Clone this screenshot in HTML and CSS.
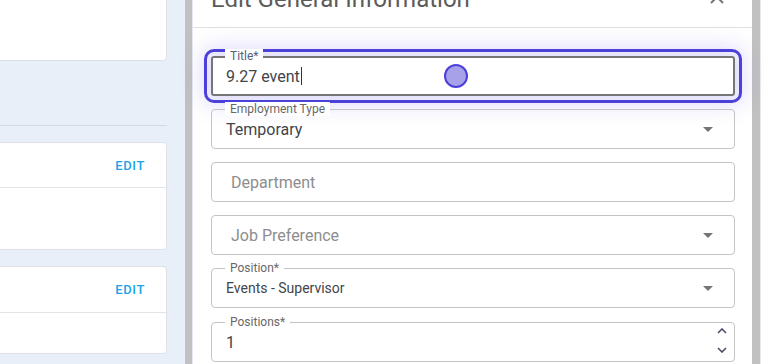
FILE: index.html
```html
<!DOCTYPE html>
<html lang="en">
<head>
    <meta charset="UTF-8">
    <meta name="viewport" content="width=device-width, initial-scale=1.0">
    <title>Edit General Information</title>
    <link rel="stylesheet" href="styles.css">
</head>
<body>
    <div class="page">
        <main class="main">
            <div class="card card-top"></div>
            <div class="section-line"></div>

            <div class="card card-mid">
                <div class="card-header">
                    <button class="edit-btn">EDIT</button>
                </div>
                <div class="card-body"></div>
            </div>

            <div class="card card-low">
                <div class="card-header">
                    <button class="edit-btn">EDIT</button>
                </div>
                <div class="card-body"></div>
            </div>
        </main>

        <div class="scrollbar"></div>

        <aside class="drawer">
            <div class="drawer-header">
                <h2 class="drawer-title">Edit General Information</h2>
                <button class="close-btn" aria-label="Close">
                    <svg width="14" height="14" viewBox="0 0 14 14">
                        <path d="M1 1 L13 13 M13 1 L1 13" stroke="#757575" stroke-width="2" fill="none"/>
                    </svg>
                </button>
            </div>

            <form class="drawer-body">
                <div class="field field-focused">
                    <label class="field-label label-focused">Title*</label>
                    <div class="field-value">9.27 event<span class="caret"></span></div>
                    <span class="click-dot"></span>
                </div>

                <div class="field">
                    <label class="field-label">Employment Type</label>
                    <div class="field-value">Temporary</div>
                    <span class="select-arrow"></span>
                </div>

                <div class="field">
                    <div class="field-placeholder">Department</div>
                </div>

                <div class="field">
                    <div class="field-placeholder">Job Preference</div>
                    <span class="select-arrow"></span>
                </div>

                <div class="field">
                    <label class="field-label">Position*</label>
                    <div class="field-value small">Events - Supervisor</div>
                    <span class="select-arrow"></span>
                </div>

                <div class="field field-last">
                    <label class="field-label">Positions*</label>
                    <div class="field-value">1</div>
                    <div class="spinner">
                        <svg width="10" height="6" viewBox="0 0 10 6">
                            <path d="M1 5 L5 1 L9 5" stroke="#4a4d6a" stroke-width="1.6" fill="none"/>
                        </svg>
                        <svg width="10" height="6" viewBox="0 0 10 6">
                            <path d="M1 1 L5 5 L9 1" stroke="#4a4d6a" stroke-width="1.6" fill="none"/>
                        </svg>
                    </div>
                </div>
            </form>
        </aside>

        <div class="scrollbar scrollbar-right"></div>
        <div class="edge"></div>
    </div>
</body>
</html>
```

FILE: styles.css
```css
* {
    margin: 0;
    padding: 0;
    box-sizing: border-box;
}

body {
    font-family: Roboto, 'Liberation Sans', Arial, sans-serif;
    background-color: #ffffff;
    color: #3c4043;
    overflow: hidden;
}

.page {
    display: flex;
    height: 364px;
    overflow: hidden;
}

/* Background page */
.main {
    width: 185px;
    flex: none;
    background-color: #e8eff8;
    padding-right: 18px;
    display: flex;
    flex-direction: column;
}

.card {
    background-color: #ffffff;
    border: 1px solid #dde1e6;
    border-radius: 4px;
    margin-left: -10px;
    width: 177px;
}

.card-top {
    height: 101px;
    margin-top: -40px;
}

.section-line {
    height: 1px;
    background-color: #d3d9e1;
    margin-top: 64px;
    width: 167px;
}

.card-mid {
    margin-top: 16px;
    height: 108px;
}

.card-low {
    margin-top: 16px;
    height: 88px;
}

.card-header {
    height: 45px;
    border-bottom: 1px solid #e0e3e7;
    display: flex;
    align-items: center;
    justify-content: flex-end;
    padding-right: 21px;
}

.card-low .card-header {
    height: 46px;
}

.edit-btn {
    border: none;
    background: none;
    font-family: Roboto, 'Liberation Sans', Arial, sans-serif;
    font-size: 13px;
    font-weight: 500;
    letter-spacing: 0.6px;
    color: #1aa3e8;
}

.scrollbar {
    width: 7px;
    flex: none;
    background-color: #c1c1c1;
}

.scrollbar-right {
    width: 8px;
}

.edge {
    width: 8px;
    flex: none;
    background-color: #ffffff;
    border-left: 1px solid #e8e8e8;
}

/* Drawer */
.drawer {
    flex: 1;
    background-color: #ffffff;
    border-left: 1px solid #e3e8f1;
    display: flex;
    flex-direction: column;
}

.drawer-header {
    height: 45px;
    margin-top: -17px;
    border-bottom: 1px solid #e0e0e0;
    padding: 0 28px 0 18px;
    display: flex;
    justify-content: space-between;
    align-items: flex-start;
}

.drawer-title {
    font-size: 24px;
    font-weight: 400;
    line-height: 28px;
    margin-top: 2px;
    color: #5b5b5b;
}

.close-btn {
    border: none;
    background: none;
    margin-top: 7px;
    display: flex;
}

.drawer-body {
    padding: 28px 17px 0 18px;
    display: flex;
    flex-direction: column;
    gap: 13px;
}

.field {
    position: relative;
    height: 40px;
    border: 1px solid #c4c4c4;
    border-radius: 4px;
    display: flex;
    align-items: center;
    padding: 0 14px;
    flex: none;
}

.field-last {
    margin-top: 1px;
}

.field-focused {
    border: 2px solid #767676;
    padding: 0 13px;
    outline: 3px solid #4b41d8;
    outline-offset: 4px;
    box-shadow: 0 0 22px 8px rgba(98, 88, 232, 0.22);
    border-radius: 3px;
}

.field-label {
    position: absolute;
    top: -8px;
    left: 13px;
    padding: 0 5px;
    background-color: #ffffff;
    font-size: 12px;
    line-height: 14px;
    color: #686868;
}

.label-focused {
    left: 12px;
    top: -9px;
    color: #52617c;
}

.field-value {
    font-size: 16px;
    color: #42454b;
    display: flex;
    align-items: center;
}

.field-value.small {
    font-size: 14px;
}

.caret {
    display: inline-block;
    width: 1px;
    height: 18px;
    background-color: #333333;
    margin-left: 1px;
}

.field-placeholder {
    font-size: 16px;
    color: #8d8d8d;
    padding-left: 5px;
}

.select-arrow {
    margin-left: auto;
    margin-right: 7px;
    width: 0;
    height: 0;
    border-left: 5px solid transparent;
    border-right: 5px solid transparent;
    border-top: 5px solid #757575;
}

.spinner {
    margin-left: auto;
    margin-right: -7px;
    height: 100%;
    display: flex;
    flex-direction: column;
    justify-content: space-between;
    padding: 5px 0 8px;
}

.click-dot {
    position: absolute;
    left: 231px;
    top: 6px;
    width: 24px;
    height: 24px;
    border-radius: 50%;
    background-color: #a7a1ea;
    border: 2.5px solid #4b41d8;
}
```
